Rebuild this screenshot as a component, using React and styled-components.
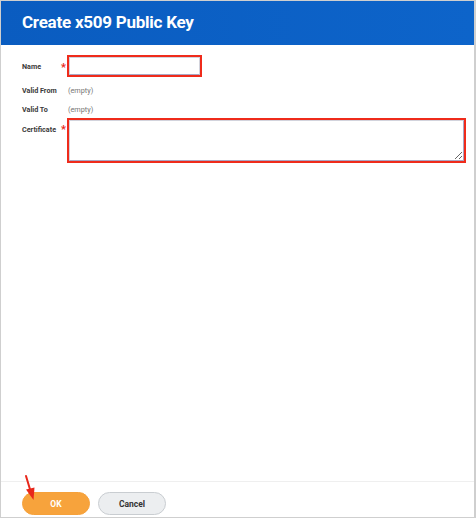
import React from "react";
import styled, { createGlobalStyle } from "styled-components";

const Global = createGlobalStyle`
  html, body { margin: 0; padding: 0; background: #fff; }
  body { font-family: Roboto, "Liberation Sans", Arial, sans-serif; }
  * { box-sizing: border-box; }
`;

const Frame = styled.div`
  position: relative;
  width: 476px;
  height: 518px;
  border: 1px solid #cfcfcf;
  border-right-width: 2px;
  display: flex;
  flex-direction: column;
  background: #fff;
`;

const Header = styled.div`
  height: 44px;
  flex: none;
  background: linear-gradient(90deg, #0a5cc0 0%, #0d64ca 100%);
  display: flex;
  align-items: center;
  padding-left: 21px;
  padding-bottom: 2px;
`;

const Title = styled.h1`
  margin: 0;
  color: #fff;
  font-size: 17px;
  font-weight: 700;
  letter-spacing: -0.25px;
`;

const Form = styled.div`
  display: grid;
  grid-template-columns: 38px 7px 1fr;
  grid-template-rows: 25px 20px 18px 46px;
  padding: 10px 8px 0 21px;
  align-items: start;
`;

const Label = styled.div`
  font-size: 7.2px;
  font-weight: 700;
  color: #3a3a3a;
  white-space: nowrap;
  height: ${(p) => p.$h || 20}px;
  display: flex;
  align-items: ${(p) => (p.$top ? "flex-start" : "center")};
  padding-top: ${(p) => (p.$top ? 7 : 0)}px;
`;

const Star = styled.div`
  color: #e8271b;
  font-size: 11px;
  font-weight: 700;
  height: ${(p) => p.$h || 20}px;
  display: flex;
  align-items: ${(p) => (p.$top ? "flex-start" : "center")};
  padding-top: ${(p) => (p.$top ? 5 : 2)}px;
  justify-content: center;
`;

const Cell = styled.div`
  height: ${(p) => p.$h || 20}px;
  display: flex;
  align-items: center;
`;

const Highlight = styled.div`
  border: 2px solid #ef2b1b;
  width: ${(p) => p.$w};
  height: ${(p) => p.$h}px;
  display: flex;
`;

const Input = styled.input`
  flex: 1;
  border: 1px solid #d2d3dc;
  border-bottom-color: #a9a7c4;
  outline: none;
  padding: 2px 4px;
  font: inherit;
  font-size: 9px;
  min-width: 0;
`;

const TextArea = styled.textarea`
  flex: 1;
  border: 1px solid #d2d3dc;
  border-bottom-color: #a9a7c4;
  border-right-color: #a9a7c4;
  outline: none;
  padding: 2px 4px;
  font: inherit;
  font-size: 9px;
  resize: both;
  min-width: 0;
`;

const Empty = styled.span`
  font-size: 7.3px;
  color: #777;
  padding-left: 1px;
`;

const Spacer = styled.div`
  flex: 1;
`;

const Footer = styled.div`
  flex: none;
  border-top: 1px solid #efefef;
  height: 36px;
  display: flex;
  align-items: flex-start;
  gap: 8px;
  padding: 10px 0 0 21px;
`;

const Button = styled.button`
  width: 68px;
  height: 23px;
  border-radius: 12px;
  font-family: Roboto, "Liberation Sans", Arial, sans-serif;
  font-size: 8.5px;
  font-weight: 700;
  cursor: pointer;
  border: 1px solid ${(p) => (p.$primary ? "#f6a13a" : "#c9cdd1")};
  background: ${(p) => (p.$primary ? "#f7a33c" : "#eceef0")};
  color: ${(p) => (p.$primary ? "#fff" : "#333")};
`;

const Arrow = styled.svg`
  position: absolute;
  left: 20px;
  top: 472px;
  pointer-events: none;
`;

export default function App() {
  return (
    <>
      <Global />
      <Frame>
        <Header>
          <Title>Create x509 Public Key</Title>
        </Header>
        <Form>
          <Label $h={22}>Name</Label>
          <Star $h={22}>*</Star>
          <Cell $h={22}>
            <Highlight $w="135px" $h={22}>
              <Input />
            </Highlight>
          </Cell>

          <Label>Valid From</Label>
          <div />
          <Cell>
            <Empty>(empty)</Empty>
          </Cell>

          <Label $h={18}>Valid To</Label>
          <div />
          <Cell $h={18}>
            <Empty>(empty)</Empty>
          </Cell>

          <Label $h={45} $top>Certificate</Label>
          <Star $h={45} $top>*</Star>
          <Cell $h={45}>
            <Highlight $w="399px" $h={45}>
              <TextArea />
            </Highlight>
          </Cell>
        </Form>
        <Spacer />
        <Footer>
          <Button $primary>OK</Button>
          <Button>Cancel</Button>
        </Footer>
        <Arrow width="22" height="32" viewBox="0 0 22 32">
          <line x1="5" y1="3" x2="9.5" y2="18" stroke="#e8271b" strokeWidth="2" strokeLinecap="round" />
          <polygon points="5,16.5 13.5,14.5 12.5,27" fill="#e8271b" />
        </Arrow>
      </Frame>
    </>
  );
}
